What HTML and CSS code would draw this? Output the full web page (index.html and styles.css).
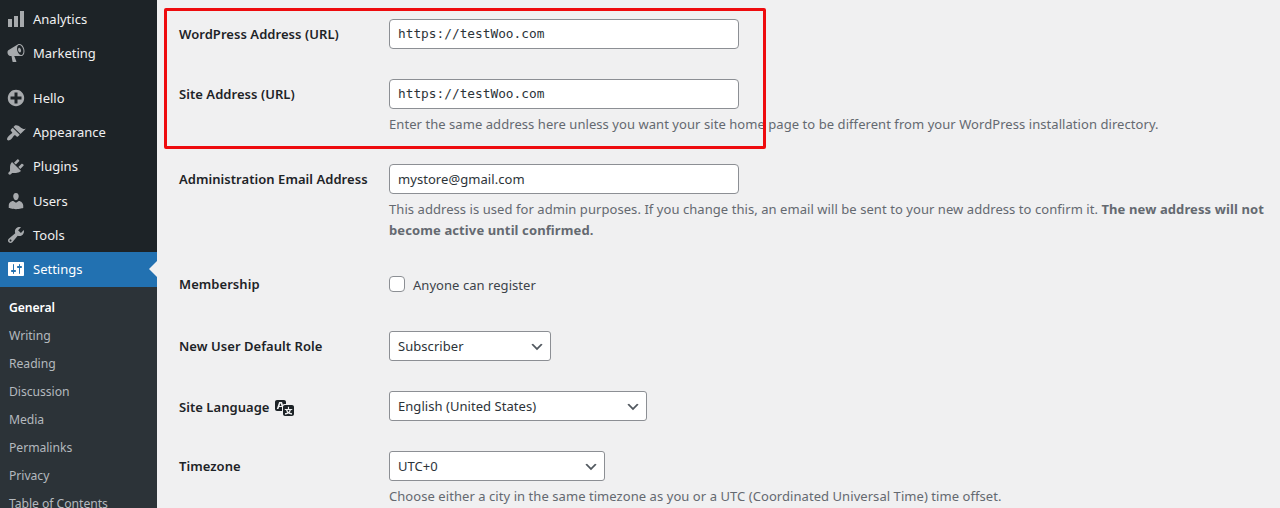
FILE: index.html
```
<!DOCTYPE html>
<html lang="en">

<head>
    <meta charset="UTF-8">
    <meta name="viewport" content="width=device-width, initial-scale=1.0">
    <title>General Settings</title>
    <link rel="stylesheet" href="styles.css">
</head>

<body>
    <!-- admin menu -->
    <nav class="sidebar">
        <ul class="menu">
            <li class="menu_item">
                <svg viewBox="0 0 20 20"><path d="M2 10h4v8H2zM8 7h4v11H8zM14 2h4v16h-4z"/></svg>
                <span>Analytics</span>
            </li>
            <li class="menu_item">
                <svg viewBox="0 0 20 20"><path d="M18.15 5.94c.46 1.62.38 3.22-.02 4.48-.42 1.28-1.26 2.18-2.3 2.48-.16.06-.26.06-.4.06-.06.02-.12.02-.18.02-.06.02-.14.02-.22.02h-6.8l2.22 5.5c.02.14-.06.26-.14.34-.08.1-.24.16-.34.16H6.95c-.1 0-.26-.06-.34-.16-.08-.08-.16-.2-.14-.34l-1-5.5H4.25l-.02-.02c-.5.06-1.08-.18-1.54-.62s-.88-1.08-1.06-1.88c-.24-.8-.2-1.56-.02-2.2.18-.62.58-1.08 1.06-1.3l.02-.02 9-5.4c.1-.06.18-.1.24-.16.06-.04.14-.08.24-.12.16-.08.28-.12.5-.18 1.04-.3 2.24.1 3.22.98s1.84 2.24 2.26 3.86zm-2.58 5.98h-.02c.4-.1.74-.34 1.04-.7.58-.7.86-1.76.86-3.04 0-.64-.1-1.3-.28-1.98-.34-1.36-1.02-2.5-1.78-3.24s-1.68-1.1-2.46-.88c-.82.22-1.4.96-1.7 2-.32 1.04-.28 2.36.06 3.72.38 1.36 1 2.5 1.8 3.24.78.74 1.62 1.1 2.48.88zm-2.54-7.08c.22-.04.42-.02.62.04.38.16.76.48 1.02 1s.42 1.2.42 1.78c0 .3-.04.56-.12.8-.18.48-.44.84-.86.94-.34.1-.8-.06-1.14-.4s-.64-.86-.78-1.5c-.18-.62-.12-1.24.02-1.72s.48-.84.82-.94z"/></svg>
                <span>Marketing</span>
            </li>
            <li class="separator"></li>
            <li class="menu_item">
                <svg viewBox="0 0 20 20"><path d="M15.8 4.2c3.2 3.21 3.2 8.39 0 11.6-3.21 3.2-8.39 3.2-11.6 0C1 12.59 1 7.41 4.2 4.2 7.41 1 12.59 1 15.8 4.2zm-4.3 11.3v-4h4v-3h-4v-4h-3v4h-4v3h4v4h3z"/></svg>
                <span>Hello</span>
            </li>
            <li class="menu_item">
                <svg viewBox="0 0 20 20"><path d="M14.48 11.06L7.41 3.99l1.5-1.5c.5-.56 2.3-.47 3.51.32 1.21.8 1.43 1.28 2.91 2.1 1.18.64 2.45 1.26 4.45.85zm-.71.71L6.7 4.7 4.93 6.47c-.39.39-.39 1.02 0 1.41l1.06 1.06c.39.39.39 1.03 0 1.42-.6.6-1.43 1.11-2.21 1.69-.35.26-.7.53-1.01.84C1.43 14.23.4 16.08 1.4 17.07c.99 1 2.84-.03 4.18-1.36.31-.31.58-.66.85-1.02.57-.78 1.08-1.61 1.69-2.21.39-.39 1.02-.39 1.41 0l1.06 1.06c.39.39 1.02.39 1.41 0z"/></svg>
                <span>Appearance</span>
            </li>
            <li class="menu_item">
                <svg viewBox="0 0 20 20"><path d="M13.11 4.36L9.87 7.6 8 5.73l3.24-3.24c.35-.34 1.05-.2 1.56.32.52.51.66 1.21.31 1.55zm-8 1.77l.91-1.12 9.01 9.01-1.19.84c-.71.71-2.63 1.16-3.82 1.16H6.14L4.9 17.26c-.59.59-1.54.59-2.12 0-.59-.58-.59-1.53 0-2.12l1.24-1.24v-3.88c0-1.13.4-3.19 1.09-3.89zm7.26 3.97l3.24-3.24c.34-.35 1.04-.21 1.55.31.52.51.66 1.21.31 1.55l-3.24 3.25z"/></svg>
                <span>Plugins</span>
            </li>
            <li class="menu_item">
                <svg viewBox="0 0 20 20"><path d="M10 9.25c-2.27 0-2.73-3.44-2.73-3.44C7 4.02 7.82 2 9.97 2c2.16 0 2.98 2.02 2.71 3.81 0 0-.41 3.44-2.68 3.44zm0 2.57L12.72 10c2.39 0 4.52 2.33 4.52 4.53v2.49s-3.65 1.13-7.24 1.13c-3.65 0-7.24-1.13-7.24-1.13v-2.49c0-2.25 1.94-4.48 4.47-4.48z"/></svg>
                <span>Users</span>
            </li>
            <li class="menu_item">
                <svg viewBox="0 0 20 20"><path d="M16.68 9.77c-1.34 1.34-3.3 1.67-4.95.99l-5.41 6.52c-.99.99-2.59.99-3.58 0s-.99-2.59 0-3.57l6.52-5.42c-.68-1.65-.35-3.61.99-4.95 1.28-1.28 3.12-1.62 4.72-1.06l-2.89 2.89 2.82 2.82 2.86-2.87c.53 1.58.18 3.39-1.08 4.65zM3.81 16.21c.4.39 1.04.39 1.43 0 .4-.4.4-1.04 0-1.43-.39-.4-1.03-.4-1.43 0-.39.39-.39 1.03 0 1.43z"/></svg>
                <span>Tools</span>
            </li>
            <li class="menu_item current">
                <svg viewBox="0 0 20 20"><path d="M18 16V4c0-.55-.45-1-1-1H3c-.55 0-1 .45-1 1v12c0 .55.45 1 1 1h14c.55 0 1-.45 1-1zM8 11h1c.55 0 1 .45 1 1s-.45 1-1 1H8v1.5c0 .28-.22.5-.5.5s-.5-.22-.5-.5V13H6c-.55 0-1-.45-1-1s.45-1 1-1h1V5.5c0-.28.22-.5.5-.5s.5.22.5.5V11zm5-2h-1c-.55 0-1-.45-1-1s.45-1 1-1h1V5.5c0-.28.22-.5.5-.5s.5.22.5.5V7h1c.55 0 1 .45 1 1s-.45 1-1 1h-1v5.5c0 .28-.22.5-.5.5s-.5-.22-.5-.5V9z"/></svg>
                <span>Settings</span>
            </li>
        </ul>
        <ul class="submenu">
            <li class="active">General</li>
            <li>Writing</li>
            <li>Reading</li>
            <li>Discussion</li>
            <li>Media</li>
            <li>Permalinks</li>
            <li>Privacy</li>
            <li>Table of Contents</li>
        </ul>
    </nav>

    <main class="content">
        <form class="settings">
            <div class="row">
                <label class="title" for="siteurl">WordPress Address (URL)</label>
                <div class="field">
                    <input class="text_input code" type="text" id="siteurl" value="https://testWoo.com">
                </div>
            </div>
            <div class="row">
                <label class="title" for="home">Site Address (URL)</label>
                <div class="field">
                    <input class="text_input code" type="text" id="home" value="https://testWoo.com">
                    <p class="description">Enter the same address here unless you want your site home page to be different from your WordPress installation directory.</p>
                </div>
            </div>
            <div class="row">
                <label class="title" for="admin_email">Administration Email Address</label>
                <div class="field">
                    <input class="text_input" type="text" id="admin_email" value="mystore@gmail.com">
                    <p class="description">This address is used for admin purposes. If you change this, an email will be sent to your new address to confirm it. <strong>The new address will not<br>become active until confirmed.</strong></p>
                </div>
            </div>
            <div class="row membership">
                <span class="title">Membership</span>
                <div class="field">
                    <label class="check_label"><input class="checkbox" type="checkbox">Anyone can register</label>
                </div>
            </div>
            <div class="row">
                <label class="title" for="default_role">New User Default Role</label>
                <div class="field">
                    <div class="select_wrap role">
                        <select id="default_role"><option>Subscriber</option></select>
                        <svg viewBox="0 0 20 20"><path d="M5 6l5 5 5-5 2 1-7 7-7-7 2-1z"/></svg>
                    </div>
                </div>
            </div>
            <div class="row">
                <label class="title with_icon" for="language">Site Language
                    <svg class="translation" viewBox="0 0 20 20"><path d="M11 7H9.49c-.63 0-1.25.3-1.59.7L7 5H4.13l-2.39 7h1.69l.74-2H7v4H2c-1.1 0-2-.9-2-2V5c0-1.1.9-2 2-2h7c1.1 0 2 .9 2 2v2zM6.51 9H4.49l1-2.93zM10 8h7c1.1 0 2 .9 2 2v7c0 1.1-.9 2-2 2h-7c-1.1 0-2-.9-2-2v-7c0-1.1.9-2 2-2zm7.25 5v-1.08h-3.17V9.75h-1.16v2.17H9.75V13h1.28c.11.85.56 1.85 1.28 2.62-.87.36-1.89.62-2.31.62-.01.02.22.97.2 1.46.84 0 2.21-.5 3.28-1.15 1.09.65 2.48 1.15 3.34 1.15-.02-.49.2-1.44.2-1.46-.43 0-1.49-.27-2.38-.63.7-.77 1.14-1.77 1.25-2.61h1.36zm-3.81 1.93c-.5-.46-.85-1.13-1.01-1.93h2.09c-.17.8-.51 1.47-1 1.93l-.04.03s-.03-.02-.04-.03z"/></svg>
                </label>
                <div class="field">
                    <div class="select_wrap language">
                        <select id="language"><option>English (United States)</option></select>
                        <svg viewBox="0 0 20 20"><path d="M5 6l5 5 5-5 2 1-7 7-7-7 2-1z"/></svg>
                    </div>
                </div>
            </div>
            <div class="row">
                <label class="title" for="timezone">Timezone</label>
                <div class="field">
                    <div class="select_wrap timezone">
                        <select id="timezone"><option>UTC+0</option></select>
                        <svg viewBox="0 0 20 20"><path d="M5 6l5 5 5-5 2 1-7 7-7-7 2-1z"/></svg>
                    </div>
                    <p class="description">Choose either a city in the same timezone as you or a UTC (Coordinated Universal Time) time offset.</p>
                </div>
            </div>
        </form>
        <!-- red frame over the two URL fields -->
        <div class="highlight"></div>
    </main>
</body>

</html>
```

FILE: styles.css
```
* {
    margin: 0;
    padding: 0;
    box-sizing: border-box;
}

body {
    display: flex;
    height: 508px;
    overflow: hidden;
    background-color: #f0f0f1;
    color: #3c434a;
    font-family: "Noto Sans", sans-serif;
    font-size: 13px;
    line-height: 21px;
}

ul {
    list-style: none;
}

.sidebar {
    display: flex;
    flex-direction: column;
    width: 157px;
    flex-shrink: 0;
    background-color: #1d2327;
}

.menu {
    padding-top: 2px;
}

.menu_item {
    display: flex;
    align-items: center;
    gap: 7.5px;
    height: 34.2px;
    padding-left: 5.5px;
    color: #f0f0f1;
}

.menu_item svg {
    width: 20px;
    height: 20px;
    fill: #a7aaad;
}

.separator {
    height: 11px;
}

.menu_item.current {
    position: relative;
    background-color: #2271b1;
    color: #fff;
}

.menu_item.current svg {
    fill: #fff;
}

/* arrow pointing at the current item */
.menu_item.current::after {
    content: "";
    position: absolute;
    right: 0;
    top: 9px;
    border: solid 8px transparent;
    border-left-width: 0;
    border-right-color: #f0f0f1;
}

.submenu {
    flex: 1;
    min-height: 0;
    overflow: hidden;
    padding-top: 7px;
    background-color: #2c3338;
}

.submenu li {
    height: 28.15px;
    padding-left: 9px;
    line-height: 28px;
    font-size: 12.2px;
    letter-spacing: -0.05px;
    color: #b4b9be;
}

.submenu li.active {
    color: #fff;
    font-weight: 600;
    letter-spacing: -0.1px;
}

.content {
    position: relative;
    flex: 1;
    padding: 4px 0 0 22px;
}

.row {
    display: grid;
    grid-template-columns: 210px 1fr;
    padding: 15px 0;
}

.title {
    display: flex;
    align-items: center;
    gap: 5px;
    height: 30px;
    color: #1d2327;
    font-weight: 600;
    letter-spacing: 0.05px;
    white-space: nowrap;
}

.title.with_icon {
    height: 32px;
    margin-bottom: -2px;
}

.translation {
    width: 20px;
    height: 20px;
    fill: #1d2327;
}

.text_input {
    display: block;
    width: 350px;
    height: 30px;
    padding: 0 8px;
    border: solid 1px #8c8f94;
    border-radius: 4px;
    background-color: #fff;
    color: #2c3338;
    font-family: inherit;
    font-size: 13px;
    letter-spacing: 0.06px;
}

.text_input.code {
    padding-bottom: 2px;
    font-family: "DejaVu Sans Mono", monospace;
    font-size: 12.8px;
    letter-spacing: 0;
}

.description {
    margin: 5px 0 -1px;
    color: #646970;
    letter-spacing: 0.06px;
    white-space: nowrap;
}

.description strong {
    letter-spacing: 0.11px;
}

.membership .title {
    height: 28px;
}

.check_label {
    display: flex;
    align-items: center;
    gap: 8px;
    height: 31px;
    letter-spacing: 0.05px;
}

.checkbox {
    appearance: none;
    width: 16px;
    height: 16px;
    margin-bottom: 3px;
    border: solid 1px #8c8f94;
    border-radius: 4px;
    background-color: #fff;
}

.select_wrap {
    display: grid;
    align-items: center;
}

.select_wrap select,
.select_wrap svg {
    grid-area: 1 / 1;
}

.select_wrap select {
    appearance: none;
    height: 30px;
    padding: 0 24px 0 8px;
    border: solid 1px #8c8f94;
    border-radius: 3px;
    background-color: #fff;
    color: #2c3338;
    font-family: inherit;
    font-size: 13px;
    letter-spacing: 0.05px;
}

.select_wrap svg {
    justify-self: end;
    width: 16px;
    height: 16px;
    margin: 1px 6px 0 0;
    fill: #50575e;
    pointer-events: none;
}

.role {
    width: 162px;
}

.language {
    width: 258px;
}

.timezone {
    width: 216px;
}

.highlight {
    position: absolute;
    left: 7px;
    top: 8px;
    width: 602px;
    height: 141px;
    border: solid 3px #ee0b0e;
    border-radius: 2px;
}
```
